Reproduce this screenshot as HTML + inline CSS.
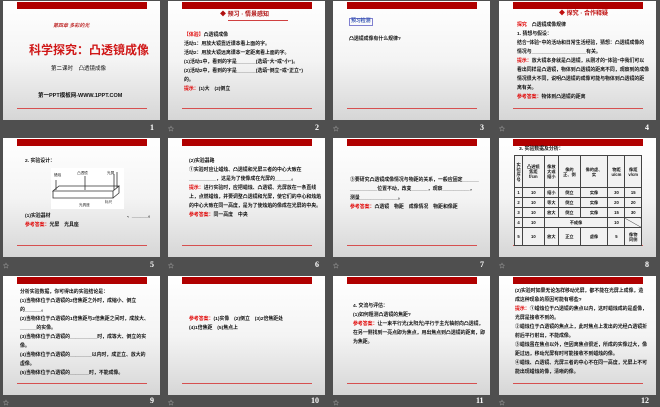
<!DOCTYPE html>
<html><head><meta charset="utf-8"><style>
*{margin:0;padding:0;box-sizing:border-box}
body{width:660px;height:407px;background:#4f4f4f;position:relative;overflow:hidden;font-family:"Liberation Sans","Noto Sans CJK SC",sans-serif}
.s{position:absolute;width:157px;height:119px;background:linear-gradient(#ffffff 0%,#f4f4f4 50%,#d6d6d6 100%);overflow:hidden}
.bar{position:absolute;left:14px;top:1px;width:130px;height:7px;background:#b00000}
.ln{position:absolute;left:14px;top:107px;width:130px;height:1px;background:#d65050}
.t{position:absolute;font-size:4.9px;line-height:9px;font-weight:bold;color:#111;white-space:nowrap}
.r{color:#e00000}
.n{position:absolute;color:#fff;font-size:8px;font-weight:bold;font-family:"Liberation Serif",serif}
.ic{position:absolute;color:#ccc;font-size:6px}
table{position:absolute;border-collapse:collapse;font-size:4.2px;font-weight:bold;color:#111;background:#f2f2f2}
td{border:0.8px solid #444;text-align:center;padding:0;height:10px;line-height:5px}
</style></head><body>

<!-- slide 1 -->
<div class="s" style="left:3px;top:1px">
<div class="bar"></div><div class="ln"></div>
<div class="t" style="left:50px;top:21px;color:#c03030;font-style:italic;font-size:5px">第四章 多彩的光</div>
<div class="t" style="left:26px;top:42px;color:#d01818;font-size:12px;line-height:14px">科学探究：凸透镜成像</div>
<div class="t" style="left:48px;top:64px;font-size:5.5px;font-weight:normal">第二课时　凸透镜成像</div>
<div class="t" style="left:35px;top:91px;font-size:5.5px">第一PPT模板网-WWW.1PPT.COM</div>
</div>

<!-- slide 2 -->
<div class="s" style="left:168px;top:1px">
<div class="bar"></div><div class="ln"></div>
<div class="t" style="left:52px;top:10px;color:#b01010;font-size:6px">◆ 预习 · 情景感知</div>
<div style="position:absolute;left:60px;top:19px;width:60px;height:1px;background:#d04040"></div>
<div class="t" style="left:16px;top:30px"><span class="r">【体验】</span>凸透镜成像</div>
<div class="t" style="left:16px;top:39px">活动1：用放大镜靠近课本看上面的字。</div>
<div class="t" style="left:16px;top:48px">活动2：用放大镜远离课本一定距离看上面的字。</div>
<div class="t" style="left:16px;top:57px">(1)活动1中，看到的字是_______(选填“大”或“小”)。</div>
<div class="t" style="left:16px;top:66px">(2)活动2中，看到的字是_______(选填“倒立”或“正立”)</div>
<div class="t" style="left:16px;top:75px">的。</div>
<div class="t" style="left:16px;top:84px"><span class="r">提示：</span>(1)大　(2)倒立</div>
</div>

<!-- slide 3 -->
<div class="s" style="left:333px;top:1px">
<div class="bar"></div><div class="ln"></div>
<div class="t" style="left:16px;top:17px;color:#3050b0;border:0.6px solid #8080d0;line-height:6px;padding:0 1px">预习检测</div>
<div class="t" style="left:16px;top:34px">凸透镜成像有什么规律?</div>
</div>

<!-- slide 4 -->
<div class="s" style="left:499px;top:1px">
<div class="bar"></div><div class="ln"></div>
<div class="t" style="left:60px;top:9px;color:#c01010;font-size:6px">◆ 探究 · 合作释疑</div>
<div class="t" style="left:18px;top:20px"><span class="r">探究</span>　凸透镜成像规律</div>
<div class="t" style="left:18px;top:29px">1. 猜想与假设：</div>
<div class="t" style="left:18px;top:38px">结合“体验”中的活动和日常生活经验，猜想：凸透镜成像的</div>
<div class="t" style="left:18px;top:47px">情况与____________________有关。</div>
<div class="t" style="left:18px;top:56px"><span class="r">提示：</span>放大镜本身就是凸透镜，从刚才的“体验”中我们可以</div>
<div class="t" style="left:18px;top:65px">看出同样是凸透镜，物体到凸透镜的距离不同，观察到的成像</div>
<div class="t" style="left:18px;top:74px">情况很大不同，说明凸透镜的成像可能与物体到凸透镜的距</div>
<div class="t" style="left:18px;top:83px">离有关。</div>
<div class="t" style="left:18px;top:92px"><span class="r">参考答案：</span>物体到凸透镜的距离</div>
</div>

<!-- slide 5 -->
<div class="s" style="left:3px;top:138px">
<div class="bar"></div><div class="ln"></div>
<div class="t" style="left:22px;top:19px">2. 实验设计：</div>
<div style="position:absolute;left:48px;top:30px;width:73px;height:41px;background:#fff"></div>
<svg style="position:absolute;left:48px;top:30px" width="73" height="41" viewBox="0 0 73 41">
<g fill="none" stroke="#333" stroke-width="0.8">
<path d="M2 23 L62 23 L68 18 L8 18 Z"/><path d="M2 23 L2 30 L62 30 L62 23"/><path d="M62 30 L68 25 L68 18"/>
<path d="M5 12 L5 22"/><path d="M34 8 L34 22"/><path d="M63 6 L63 22 M66 4 L66 20"/>
</g>
<text x="3" y="8" font-size="3.6" fill="#222">蜡烛</text><text x="26" y="6" font-size="3.6" fill="#222">凸透镜</text><text x="56" y="6" font-size="3.6" fill="#222">光屏</text>
<text x="28" y="38" font-size="3.6" fill="#222">光具座</text><text x="54" y="35" font-size="3.6" fill="#222">标尺</text>
</svg>
<div class="t" style="left:22px;top:74px">(1)实验器材</div>
<div class="t" style="left:124px;top:74px">、______。</div>
<div class="t" style="left:22px;top:83px"><span class="r">参考答案：</span>光屏　光具座</div>
</div>

<!-- slide 6 -->
<div class="s" style="left:168px;top:138px">
<div class="bar"></div><div class="ln"></div>
<div class="t" style="left:21px;top:19px">(2)实验器路</div>
<div class="t" style="left:21px;top:28px">①实验时应让蜡烛、凸透镜和光屏三者的中心大致在</div>
<div class="t" style="left:21px;top:37px">__________，这是为了使像成在光屏的______。</div>
<div class="t" style="left:21px;top:46px"><span class="r">提示：</span>进行实验时，应把蜡烛、凸透镜、光屏放在一条直线</div>
<div class="t" style="left:21px;top:55px">上，点燃蜡烛，并要调整凸透镜和光屏，使它们的中心和烛焰</div>
<div class="t" style="left:21px;top:64px">的中心大致在同一高度，是为了使烛焰的像成在光屏的中央。</div>
<div class="t" style="left:21px;top:73px"><span class="r">参考答案：</span>同一高度　中央</div>
</div>

<!-- slide 7 -->
<div class="s" style="left:333px;top:138px">
<div class="bar"></div><div class="ln"></div>
<div class="t" style="left:17px;top:38px">③要研究凸透镜成像情况与物距的关系，一般应固定______</div>
<div class="t" style="left:17px;top:47px">__________位置不动，改变______，观察__________，</div>
<div class="t" style="left:17px;top:56px">测量______________。</div>
<div class="t" style="left:17px;top:65px"><span class="r">参考答案：</span>凸透镜　物距　成像情况　物距和像距</div>
</div>

<!-- slide 8 -->
<div class="s" style="left:499px;top:138px">
<div class="bar"></div><div class="ln"></div>
<div class="t" style="left:20px;top:8px;line-height:7px">3. 实验数据及分析：</div>
<table style="left:15px;top:17px;width:128px">
<tr style="height:32px"><td style="height:32px">实<br>验<br>序<br>号</td><td>凸透镜<br>焦距<br>f/cm</td><td>像放<br>大或<br>缩小</td><td>像的<br>正、倒</td><td>像的虚、<br>实</td><td>物距<br>u/cm</td><td>像距<br>v/cm</td></tr>
<tr><td>1</td><td>10</td><td>缩小</td><td>倒立</td><td>实像</td><td>30</td><td>15</td></tr>
<tr><td>2</td><td>10</td><td>等大</td><td>倒立</td><td>实像</td><td>20</td><td>20</td></tr>
<tr><td>3</td><td>10</td><td>放大</td><td>倒立</td><td>实像</td><td>15</td><td>30</td></tr>
<tr><td>4</td><td>10</td><td colspan="3">不成像</td><td>10</td><td style="background:linear-gradient(to top right,transparent 47%,#444 50%,transparent 53%)"></td></tr>
<tr><td style="height:18px">5</td><td>10</td><td>放大</td><td>正立</td><td>虚像</td><td>5</td><td>像物<br>同侧</td></tr>
</table>
</div>

<!-- slide 9 -->
<div class="s" style="left:3px;top:276px">
<div class="bar"></div><div class="ln"></div>
<div class="t" style="left:17px;top:12px">分析实验数据，你可得出的实验结论是：</div>
<div class="t" style="left:17px;top:21px">(1)当物体位于凸透镜的2倍焦距之外时，成缩小、倒立</div>
<div class="t" style="left:17px;top:30px">的______。</div>
<div class="t" style="left:17px;top:39px">(2)当物体位于凸透镜的1倍焦距与2倍焦距之间时，成放大、</div>
<div class="t" style="left:17px;top:48px">______的实像。</div>
<div class="t" style="left:17px;top:57px">(3)当物体位于凸透镜的__________时，成等大、倒立的实</div>
<div class="t" style="left:17px;top:66px">像。</div>
<div class="t" style="left:17px;top:75px">(4)当物体位于凸透镜的________以内时，成正立、放大的</div>
<div class="t" style="left:17px;top:84px">虚像。</div>
<div class="t" style="left:17px;top:93px">(5)当物体位于凸透镜的_______时，不能成像。</div>
</div>

<!-- slide 10 -->
<div class="s" style="left:168px;top:276px">
<div class="bar"></div><div class="ln"></div>
<div class="t" style="left:21px;top:39px"><span class="r">参考答案：</span>(1)实像　(2)倒立　(3)2倍焦距处</div>
<div class="t" style="left:21px;top:48px">(4)1倍焦距　(5)焦点上</div>
</div>

<!-- slide 11 -->
<div class="s" style="left:333px;top:276px">
<div class="bar"></div><div class="ln"></div>
<div class="t" style="left:20px;top:26px">4. 交流与评估：</div>
<div class="t" style="left:20px;top:35px">(1)如何粗测凸透镜的焦距?</div>
<div class="t" style="left:20px;top:44px"><span class="r">参考答案：</span>让一束平行光(太阳光)平行于主光轴射向凸透镜，</div>
<div class="t" style="left:20px;top:53px">在另一侧找到一亮点即为焦点，用出焦点到凸透镜的距离，即</div>
<div class="t" style="left:20px;top:62px">为焦距。</div>
</div>

<!-- slide 12 -->
<div class="s" style="left:499px;top:276px">
<div class="bar"></div><div class="ln"></div>
<div class="t" style="left:16px;top:11px">(2)实验时如果无论怎样移动光屏，都不能在光屏上成像，造</div>
<div class="t" style="left:16px;top:20px">成这种现象的原因可能有哪些?</div>
<div class="t" style="left:16px;top:29px"><span class="r">提示：</span>①蜡烛位于凸透镜的焦点以内，这时蜡烛成的是虚像，</div>
<div class="t" style="left:16px;top:38px">光屏是接收不到的。</div>
<div class="t" style="left:16px;top:47px">②蜡烛位于凸透镜的焦点上，此时焦点上发出的光经凸透镜折</div>
<div class="t" style="left:16px;top:56px">射后平行射出，不能成像。</div>
<div class="t" style="left:16px;top:65px">③蜡烛虽在焦点以外，但因离焦点很近，所成的实像过大，像</div>
<div class="t" style="left:16px;top:74px">距过远，移动光屏有时可能接收不到蜡烛的像。</div>
<div class="t" style="left:16px;top:83px">④蜡烛、凸透镜、光屏三者的中心不在同一高度，光屏上不可</div>
<div class="t" style="left:16px;top:92px">能出现蜡烛的像，清晰的像。</div>
</div>

<!-- numbers -->
<div class="n" style="left:150px;top:123px">1</div>
<div class="n" style="left:315px;top:123px">2</div>
<div class="n" style="left:480px;top:123px">3</div>
<div class="n" style="left:645px;top:123px">4</div>
<div class="n" style="left:150px;top:260px">5</div>
<div class="n" style="left:315px;top:260px">6</div>
<div class="n" style="left:480px;top:260px">7</div>
<div class="n" style="left:645px;top:260px">8</div>
<div class="n" style="left:150px;top:396px">9</div>
<div class="n" style="left:311px;top:396px">10</div>
<div class="n" style="left:476px;top:396px">11</div>
<div class="n" style="left:641px;top:396px">12</div>

<div class="ic" style="left:168px;top:124px">☆</div>
<div class="ic" style="left:333px;top:124px">☆</div>
<div class="ic" style="left:499px;top:124px">☆</div>
<div class="ic" style="left:3px;top:261px">☆</div>
<div class="ic" style="left:168px;top:261px">☆</div>
<div class="ic" style="left:333px;top:261px">☆</div>
<div class="ic" style="left:499px;top:261px">☆</div>
<div class="ic" style="left:3px;top:398px">☆</div>
<div class="ic" style="left:168px;top:398px">☆</div>
<div class="ic" style="left:333px;top:398px">☆</div>
<div class="ic" style="left:499px;top:398px">☆</div>
</body></html>
